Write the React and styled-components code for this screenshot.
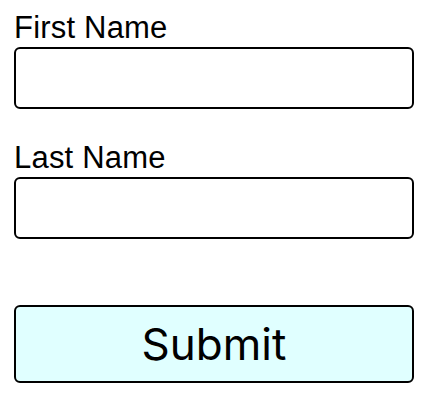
import React from "react";
import styled, { createGlobalStyle } from "styled-components";

const Global = createGlobalStyle`
  html, body { margin: 0; padding: 0; background: #fff; }
  body { font-family: "Liberation Sans", Arial, sans-serif; color: #000; }
`;

const Form = styled.form`
  display: flex;
  flex-direction: column;
  width: 400px;
  padding: 12px 0 0 14px;
`;

const Field = styled.div`
  display: flex;
  flex-direction: column;
  gap: 3px;
  margin-bottom: ${(p) => p.$mb}px;
`;

const Label = styled.label`
  font-family: "Liberation Sans", Arial, sans-serif;
  font-size: 31px;
  letter-spacing: 0.2px;
  line-height: 32px;
  display: block;
`;

const Input = styled.input`
  box-sizing: border-box;
  width: 400px;
  height: 62px;
  border: 2px solid #000;
  border-radius: 6px;
  background: #fff;
  margin: 0;
  padding: 0 10px;
  font-size: 24px;
  outline: none;
`;

const Button = styled.button`
  box-sizing: border-box;
  width: 400px;
  height: 78px;
  border: 2px solid #000;
  border-radius: 6px;
  background: #e0ffff;
  font-family: Inter, "Liberation Sans", sans-serif;
  font-size: 44px;
  color: #000;
  margin: 0;
  padding: 0;
  cursor: pointer;
`;

export default function App() {
  return (
    <>
      <Global />
      <Form onSubmit={(e) => e.preventDefault()}>
        <Field $mb={33}>
          <Label htmlFor="first">First Name</Label>
          <Input id="first" type="text" />
        </Field>
        <Field $mb={66}>
          <Label htmlFor="last">Last Name</Label>
          <Input id="last" type="text" />
        </Field>
        <Button type="submit">Submit</Button>
      </Form>
    </>
  );
}
